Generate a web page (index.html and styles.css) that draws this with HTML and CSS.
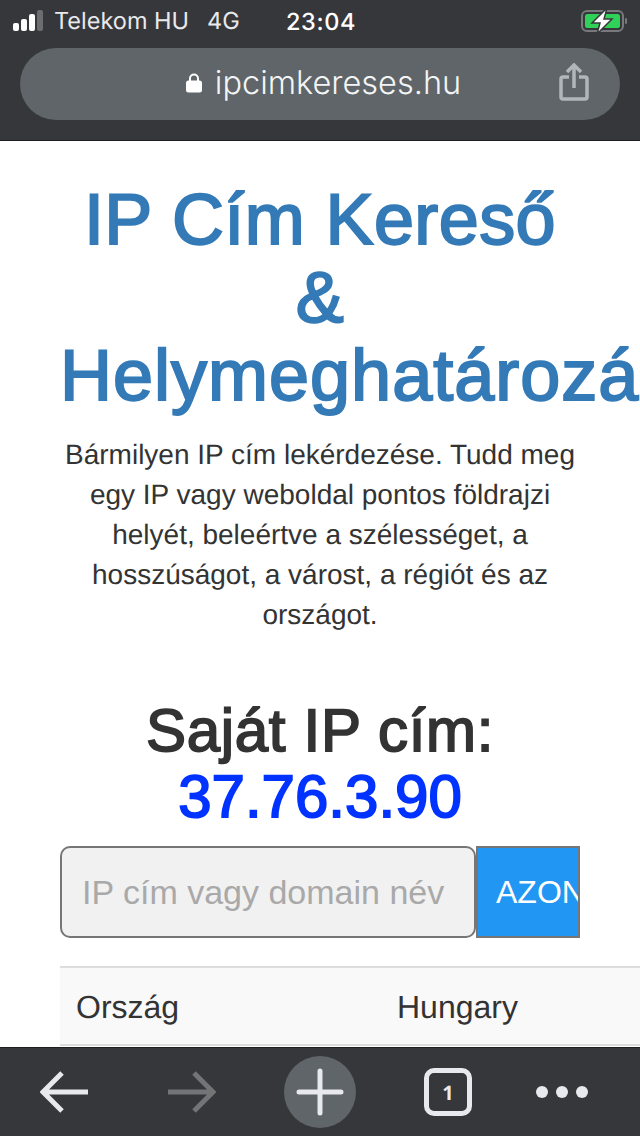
FILE: index.html
```html
<!DOCTYPE html>
<html lang="hu">
<head>
<meta charset="utf-8">
<title>IP Cím Kereső</title>
<link rel="stylesheet" href="styles.css">
</head>
<body>
<div class="app">
  <header class="chrome">
    <div class="status">
      <div class="status-left">
        <span class="signal"><i class="b1"></i><i class="b2"></i><i class="b3"></i><i class="b4"></i></span>
        <span class="carrier">Telekom HU</span>
        <span class="net">4G</span>
      </div>
      <span class="clock">23:04</span>
      <svg class="battery" width="48" height="26" viewBox="0 0 48 26">
        <rect x="2" y="3" width="41" height="20" rx="5" fill="none" stroke="#77797c" stroke-width="2"/>
        <rect x="5" y="6" width="35" height="14" rx="2.5" fill="#30d158"/>
        <rect x="45" y="10" width="2" height="6" rx="1" fill="#77797c"/>
        <path d="M27 0 L12 15 L20 15 L17 26 L32 11 L24 11 Z" fill="#fff" stroke="#36373b" stroke-width="1.5"/>
      </svg>
    </div>
    <div class="urlbar">
      <div class="address">
        <svg class="lock" width="16" height="20" viewBox="0 0 16 20">
          <path d="M4 8 V5.5 a4 4 0 0 1 8 0 V8" fill="none" stroke="#fff" stroke-width="2"/>
          <rect x="0" y="7.5" width="16" height="12" rx="2.5" fill="#fff"/>
        </svg>
        <span class="url">ipcimkereses.hu</span>
      </div>
      <svg class="share" width="30" height="38" viewBox="0 0 30 38">
        <path d="M10 14 H4 a2 2 0 0 0 -2 2 V34 a2 2 0 0 0 2 2 H26 a2 2 0 0 0 2 -2 V16 a2 2 0 0 0 -2 -2 H20" fill="none" stroke="#b1b6b9" stroke-width="3.5"/>
        <path d="M15 25 V3 M8 9 L15 2 L22 9" fill="none" stroke="#b1b6b9" stroke-width="3.5"/>
      </svg>
    </div>
  </header>

  <main class="page">
    <section class="intro">
      <h1 class="title">IP Cím Kereső<br>&amp;<br><span class="word">Helymeghatározás</span></h1>
      <p class="lead">Bármilyen IP cím lekérdezése. Tudd meg egy IP vagy weboldal pontos földrajzi helyét, beleértve a szélességet, a hosszúságot, a várost, a régiót és az országot.</p>
      <h2 class="own-ip">Saját IP cím:<br><span class="ip">37.76.3.90</span></h2>
      <form class="lookup">
        <input class="lookup-input" type="text" placeholder="IP cím vagy domain név">
        <button class="lookup-btn" type="button">AZONOSÍTÁS</button>
      </form>
    </section>
    <table class="info">
      <tr><td class="key">Ország</td><td>Hungary</td></tr>
    </table>
  </main>

  <footer class="toolbar">
    <svg class="tool back" width="48" height="44" viewBox="0 0 48 44">
      <path d="M48 22 H3 M22 3 L3 22 L22 41" fill="none" stroke="#e8e9ee" stroke-width="5"/>
    </svg>
    <svg class="tool forward" width="48" height="44" viewBox="0 0 48 44">
      <path d="M0 22 H45 M26 3 L45 22 L26 41" fill="none" stroke="#737475" stroke-width="5"/>
    </svg>
    <span class="plus">
      <svg width="48" height="48" viewBox="0 0 48 48">
        <path d="M3 24 H45 M24 3 V45" fill="none" stroke="#e8e9ee" stroke-width="5" stroke-linecap="round"/>
      </svg>
    </span>
    <span class="tabs">1</span>
    <span class="more"><i></i><i></i><i></i></span>
  </footer>
</div>
</body>
</html>
```
FILE: styles.css
```css
* { box-sizing: border-box; }
html, body { margin: 0; padding: 0; }
body { background: #fff; font-family: "Liberation Sans", Arial, sans-serif; color: #333; text-rendering: geometricPrecision; }
.app { width: 640px; height: 1136px; display: flex; flex-direction: column; overflow: hidden; }

.chrome { height: 141px; flex: none; background: #36373b; border-bottom: 1px solid #1e1f21; font-family: Inter, "Liberation Sans", sans-serif; color: #e9e9eb; }
.status { height: 48px; display: flex; align-items: center; justify-content: space-between; padding: 0 12px 7px 13px; position: relative; }
.status-left { display: flex; align-items: center; }
.signal { display: flex; align-items: flex-end; gap: 2px; height: 21px; margin-right: 11px; }
.signal i { display: block; width: 6px; background: #fff; border-radius: 2px; }
.signal .b1 { height: 8px; }
.signal .b2 { height: 12px; }
.signal .b3 { height: 17px; }
.signal .b4 { height: 21px; background: #6b6d70; }
.carrier { font-size: 23.5px; }
.net { font-size: 23.5px; margin-left: 18px; }
.clock { position: absolute; left: 286px; top: 7px; font-size: 23.5px; font-weight: 500; letter-spacing: 0.6px; color: #fff; }
.urlbar { margin: 0 20px; height: 72px; border-radius: 36px; background: #5f6568; display: flex; align-items: center; justify-content: center; position: relative; }
.address { display: flex; align-items: center; gap: 13px; margin: -3px 0 0 7px; }
.url { font-size: 32.5px; font-weight: 300; color: #f4f5f6; }
.share { position: absolute; right: 31px; top: 15px; }

.page { flex: 1; min-height: 0; overflow: hidden; padding-left: 60px; }
.intro { width: 520px; text-align: center; }
.title { margin: 40px 0 0; font-size: 72px; line-height: 78px; font-weight: 400; letter-spacing: 0.4px; -webkit-text-stroke: 2px #337ab7; color: #337ab7; }
.word { letter-spacing: 1px; }
.lead { margin: 20px 0 0; font-size: 28px; line-height: 40px; }
.own-ip { margin: 63px 0 0; font-size: 60px; line-height: 66px; font-weight: 400; letter-spacing: 0.7px; -webkit-text-stroke: 1.8px #333; color: #333; }
.ip { color: #0033ff; letter-spacing: 0; -webkit-text-stroke-color: #0033ff; }
.lookup { display: flex; margin-top: 16px; height: 92px; }
.lookup-input { width: 416px; height: 92px; padding: 0 20px; border: 2px solid #767676; border-radius: 10px; background: #f1f1f1; font: 34px "Liberation Sans", Arial, sans-serif; }
.lookup-input::placeholder { color: #a9a9a9; opacity: 1; }
.lookup-btn { width: 104px; height: 92px; padding: 0 18px; border: 2px solid #767676; border-radius: 0; background: #2196f3; color: #fff; font: 32px "Liberation Sans", Arial, sans-serif; white-space: nowrap; overflow: hidden; text-align: left; }

.info { width: 580px; margin-top: 28px; border-collapse: separate; border-spacing: 0; font-size: 32px; color: #333; background: #f9f9f9; }
.info td { height: 80px; padding: 3px 16px 0; border-top: 2px solid #ddd; border-bottom: 2px solid #ddd; }
.info .key { width: 321px; }

.toolbar { height: 89px; flex: none; background: #36373b; border-top: 1px solid #1e1f21; display: flex; align-items: center; padding-left: 40px; }
.tool { display: block; }
.forward { margin-left: 80px; }
.plus { width: 72px; height: 72px; margin-left: 68px; border-radius: 50%; background: #5f6568; display: flex; align-items: center; justify-content: center; }
.plus svg { display: block; }
.tabs { width: 48px; height: 48px; margin-left: 68px; border: 5px solid #e8e9ee; border-radius: 10px; display: flex; align-items: center; justify-content: center; color: #e8e9ee; font: 700 20px "Open Sans", sans-serif; }
.more { display: flex; gap: 8px; margin-left: 64px; }
.more i { display: block; width: 12px; height: 12px; border-radius: 50%; background: #e8e9ee; }
```
